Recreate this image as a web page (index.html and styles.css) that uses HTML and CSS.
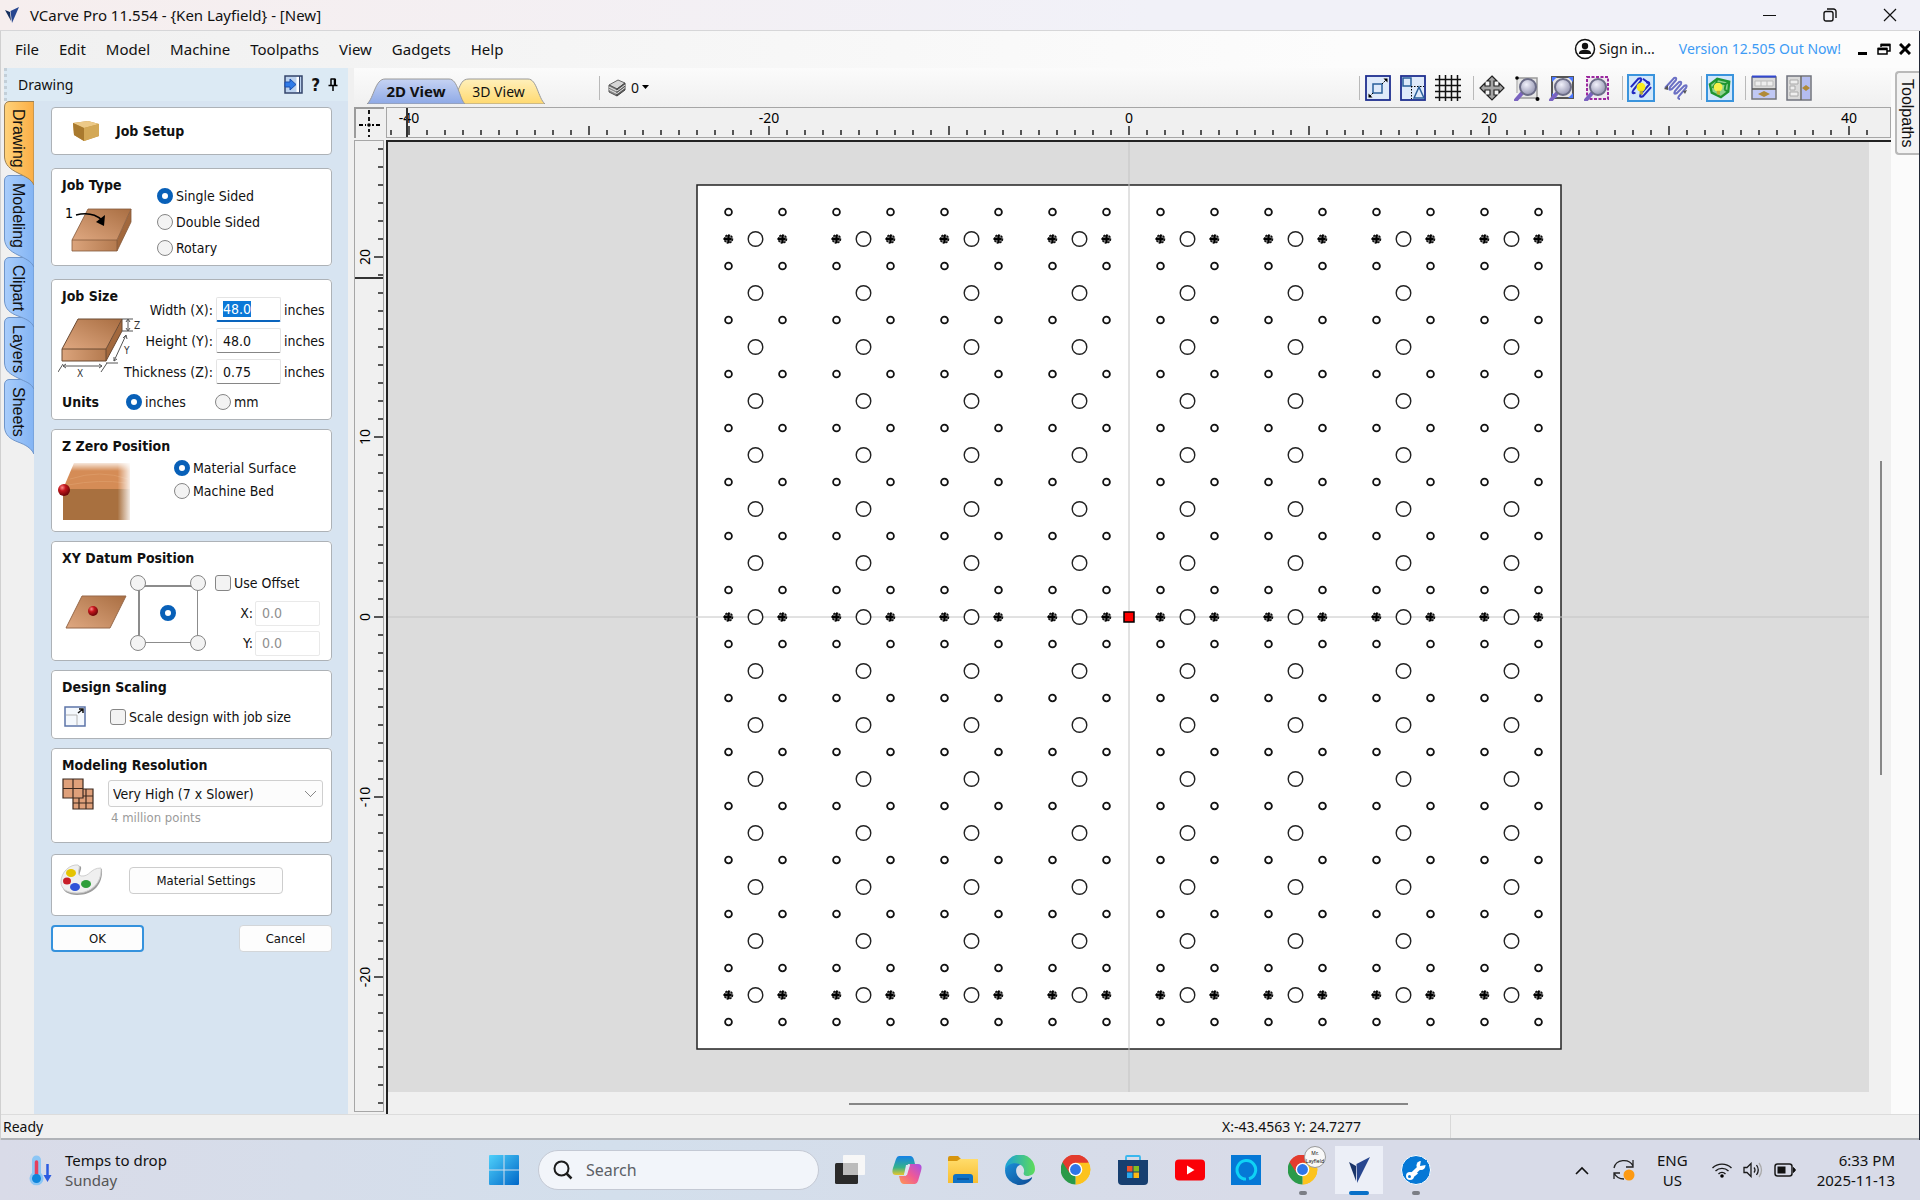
FILE: index.html
```html
<!DOCTYPE html>
<html lang="en">
<head>
    <meta charset="UTF-8">
    <meta name="viewport" content="width=device-width, initial-scale=1.0">
    <title>VCarve Pro 11.554 - {Ken Layfield} - [New]</title>
    <link rel="stylesheet" href="styles.css">
</head>
<body>

    <!-- shared gradients -->
    <svg class="defs" width="0" height="0" aria-hidden="true">
        <defs>
            <linearGradient id="wood" x1="0" y1="1" x2="1" y2="0"><stop offset="0" stop-color="#dfa881"/><stop offset="1" stop-color="#a96e42"/></linearGradient>
            <linearGradient id="woodSide" x1="0" y1="0" x2="1" y2="0"><stop offset="0" stop-color="#dba47c"/><stop offset="1" stop-color="#b47a4f"/></linearGradient>
            <linearGradient id="tabOrange"><stop offset="0" stop-color="#ffd27a"/><stop offset="1" stop-color="#fbae45"/></linearGradient>
            <linearGradient id="tabBlue"><stop offset="0" stop-color="#a9cdfb"/><stop offset="1" stop-color="#83b4f4"/></linearGradient>
            <linearGradient id="view2d" x1="0" y1="0" x2="0" y2="1"><stop offset="0" stop-color="#c6d3f3"/><stop offset="1" stop-color="#8ea9e6"/></linearGradient>
            <linearGradient id="view3d" x1="0" y1="0" x2="0" y2="1"><stop offset="0" stop-color="#fff0bb"/><stop offset="1" stop-color="#ffd970"/></linearGradient>
            <radialGradient id="ball" cx=".35" cy=".3" r=".7"><stop offset="0" stop-color="#ff8a8a"/><stop offset=".4" stop-color="#c4161c"/><stop offset="1" stop-color="#6d0508"/></radialGradient>
            <radialGradient id="lens" cx=".4" cy=".35" r=".7"><stop offset="0" stop-color="#f1f1fb"/><stop offset="1" stop-color="#8f90ad"/></radialGradient>
            <linearGradient id="win" x1="0" y1="0" x2="1" y2="1"><stop offset="0" stop-color="#4fd0fa"/><stop offset="1" stop-color="#0067c8"/></linearGradient>
            <linearGradient id="folder" x1="0" y1="0" x2="0" y2="1"><stop offset="0" stop-color="#ffdc6b"/><stop offset="1" stop-color="#f8bd2f"/></linearGradient>
            <linearGradient id="edgeTop" x1="0" y1="0" x2="1" y2="0"><stop offset="0" stop-color="#199fdb"/><stop offset="1" stop-color="#5fdc58"/></linearGradient>
            <linearGradient id="edgeLow" x1="0" y1="0" x2="1" y2="1"><stop offset="0" stop-color="#1b8fd8"/><stop offset="1" stop-color="#0d4a94"/></linearGradient>
            <linearGradient id="pilotA" x1="0" y1="0" x2="0" y2="1"><stop offset="0" stop-color="#1581e8"/><stop offset=".6" stop-color="#35b28a"/><stop offset="1" stop-color="#e9c62c"/></linearGradient>
            <linearGradient id="pilotB" x1="1" y1="0" x2="0" y2="1"><stop offset="0" stop-color="#a650e8"/><stop offset=".5" stop-color="#ef5a96"/><stop offset="1" stop-color="#ff9a4f"/></linearGradient>
            <g id="lensIcon">
                <path d="M2 25 9 17" stroke="#7a63c0" stroke-width="4" stroke-linecap="round"/>
                <circle cx="14" cy="12" r="8" fill="url(#lens)" stroke="#6b6c86" stroke-width="2"/>
            </g>
            <g id="chromeIcon">
                <path d="M15 15 1.600 7.500A15.400 15.400 0 0 1 28.400 7.500Z" fill="#e33b2e"/>
                <path d="M15 15 28.400 7.500A15.400 15.400 0 0 1 15 30.400Z" fill="#fcc31e"/>
                <path d="M15 15 15 30.400A15.400 15.400 0 0 1 1.600 7.500Z" fill="#2a9a49"/>
                <path d="M15 8H28.600A15.400 15.400 0 0 0 1.600 7.500L8.900 18.500Z" fill="#e33b2e"/>
                <path d="M21 18.500 15 30.400A15.400 15.400 0 0 0 28.600 8H15Z" fill="#fcc31e"/>
                <circle cx="15" cy="15" r="7" fill="#fff"/>
                <circle cx="15" cy="15" r="5.600" fill="#2f76e8"/>
            </g>
        </defs>
    </svg>

    <header class="titlebar">
        <svg width="16" height="18" viewBox="0 0 16 18"><path d="M1 4 6 6 7 15Z" fill="#16305f"/><path d="M6.500 5 15 1 8 17Z" fill="#27468f"/></svg>
        <h1>VCarve Pro 11.554 - {Ken Layfield} - [New]</h1>
        <div class="window-buttons">
            <button aria-label="Minimize"><svg width="14" height="14" viewBox="0 0 14 14"><path d="M0 7.500H13" stroke="#111"/></svg></button>
            <button aria-label="Restore"><svg width="14" height="14" viewBox="0 0 14 14" fill="none" stroke="#111" stroke-width="1.400"><rect x="1" y="3.500" width="9" height="9.500" rx="2"/><path d="M4 1H10.500A2.500 2.500 0 0 1 13 3.500V10"/></svg></button>
            <button aria-label="Close"><svg width="14" height="14" viewBox="0 0 14 14"><path d="M1 1 13 13M13 1 1 13" stroke="#111" stroke-width="1.200"/></svg></button>
        </div>
    </header>

    <div class="window">
        <nav class="menubar">
            <button>File</button>
            <button>Edit</button>
            <button>Model</button>
            <button>Machine</button>
            <button>Toolpaths</button>
            <button>View</button>
            <button>Gadgets</button>
            <button>Help</button>
            <button class="sign-in">
                <svg width="22" height="22" viewBox="0 0 22 22"><circle cx="11" cy="11" r="9.500" fill="#fff" stroke="#111" stroke-width="1.500"/><circle cx="11" cy="8" r="3.200" fill="#111"/><path d="M4.800 16C5 12.500 8 11.800 11 11.800S17 12.500 17.200 16Z" fill="#111"/></svg>
                Sign in...
            </button>
            <a class="version" href="#">Version 12.505 Out Now!</a>
            <div class="mdi-buttons">
                <button aria-label="Minimize view"><svg width="12" height="12" viewBox="0 0 12 12"><path d="M1 10.500H10" stroke="#000" stroke-width="3"/></svg></button>
                <button aria-label="Restore view"><svg width="14" height="12" viewBox="0 0 14 12" fill="none" stroke="#000" stroke-width="1.500"><path d="M4 4V1.500H13V8H10"/><path d="M4 2H13M1 6H10" stroke-width="2.500"/><rect x="1" y="5.500" width="9" height="5.500"/></svg></button>
                <button aria-label="Close view"><svg width="12" height="12" viewBox="0 0 12 12"><path d="M1 1 11 11M11 1 1 11" stroke="#000" stroke-width="3"/></svg></button>
            </div>
        </nav>

        <main class="workspace">
            <!-- Drawing panel -->
            <section class="side">
                <header class="side-header">
                    <h2>Drawing</h2>
                    <button aria-label="Switch layout"><svg width="19" height="19" viewBox="0 0 19 19"><rect x="1" y="1" width="17" height="17" fill="#bcd2ee" stroke="#34456b" stroke-width="1.500"/><path d="M14 2V17" stroke="#fff" stroke-width="3"/><path d="M15.500 1V18" stroke="#34456b"/><path d="M1 7H6V4L12 9.500 6 15V12H1Z" fill="#2f7be8" stroke="#1b4fae"/></svg></button>
                    <button class="help">?</button>
                    <button aria-label="Pin"><svg width="10" height="14" viewBox="0 0 10 14"><path d="M2.500 1H7.500M3 1V7M6.500 1V7M7.300 1V7M0.500 7.500H9.500M5 8V13" stroke="#000" stroke-width="1.500"/></svg></button>
                </header>
                <div class="side-body">
                    <div class="rail">
                        <button class="rail-tab drawing"><svg viewBox="0 0 30 84" preserveAspectRatio="none"><path d="M30 .5H5Q.5 1 .5 6V56C1 64 6 68 14 72S27 78 30 84Z" fill="url(#tabOrange)" stroke="#9b8157"/></svg><span>Drawing</span></button>
                        <button class="rail-tab modeling"><svg viewBox="0 0 30 92" preserveAspectRatio="none"><path d="M30 .5H5Q.5 1 .5 6V64C1 72 6 76 14 80S27 86 30 92Z" fill="url(#tabBlue)" stroke="#6f95c9"/></svg><span>Modeling</span></button>
                        <button class="rail-tab clipart"><svg viewBox="0 0 30 70" preserveAspectRatio="none"><path d="M30 .5H5Q.5 1 .5 6V44C1 52 6 56 14 59S27 64 30 70Z" fill="url(#tabBlue)" stroke="#6f95c9"/></svg><span>Clipart</span></button>
                        <button class="rail-tab layers"><svg viewBox="0 0 30 72" preserveAspectRatio="none"><path d="M30 .5H5Q.5 1 .5 6V46C1 54 6 57 14 61S27 66 30 72Z" fill="url(#tabBlue)" stroke="#6f95c9"/></svg><span>Layers</span></button>
                        <button class="rail-tab sheets"><svg viewBox="0 0 30 75" preserveAspectRatio="none"><path d="M30 .5H5Q.5 1 .5 6V48C1 56 6 60 14 63S27 69 30 75Z" fill="url(#tabBlue)" stroke="#6f95c9"/></svg><span>Sheets</span></button>
                    </div>

                    <form class="cards">
                        <div class="card heading">
                            <svg width="28" height="24" viewBox="0 0 28 24"><path d="M1 4 16 2 27 5V17L12 22 2 16Z" fill="#c59440"/><path d="M1 4 16 2 27 5 12 9Z" fill="#ecc987"/><path d="M1 4 12 9V22L2 16Z" fill="#a97a2e"/><path d="M12 9 27 5V17L12 22Z" fill="#d3a856"/></svg>
                            <h3>Job Setup</h3>
                        </div>

                        <fieldset class="card job-type">
                            <div>
                                <h3>Job Type</h3>
                                <svg width="74" height="48" viewBox="0 0 74 48">
                                    <path d="M26 4H69L55 35H10Z" fill="url(#wood)"/><path d="M10 35H55V46H10Z" fill="url(#woodSide)"/><path d="M55 35 69 4V17L55 46Z" fill="#a2683d"/>
                                    <path d="M10 35H55V46H10ZM26 4H69L55 35M69 4V17L55 46M26 4 10 35" fill="none" stroke="#84583a" stroke-width=".8"/>
                                    <path d="M14 10Q30 6 40 15" fill="none" stroke="#000" stroke-width="1.600"/><path d="M34 17 43 10 42 21Z"/>
                                    <text x="3" y="13" font-size="14">1</text>
                                </svg>
                            </div>
                            <div class="options">
                                <label><input type="radio" name="type" checked> Single Sided</label>
                                <label><input type="radio" name="type"> Double Sided</label>
                                <label><input type="radio" name="type"> Rotary</label>
                            </div>
                        </fieldset>

                        <fieldset class="card job-size">
                            <div class="split">
                                <div class="size-picture">
                                    <h3>Job Size</h3>
                                    <svg width="86" height="62" viewBox="0 0 86 62">
                                        <path d="M20 2H64L48 32H4Z" fill="url(#wood)"/><path d="M4 32H48V44H4Z" fill="url(#woodSide)"/><path d="M48 32 64 2V14L48 44Z" fill="#a2683d"/>
                                        <path d="M4 32H48V44H4ZM20 2H64L48 32M64 2V14L48 44M20 2 4 32" fill="none" stroke="#6b4a33"/>
                                        <g stroke="#555" fill="none"><path d="M64 2H75M64 14H75M70 3V13M68 5 70 2 72 5M68 11 70 14 72 11M5 47 0 55M49 46 43 55M5 49H44M8 47 5 49 8 51M41 47 44 49 41 51M48 46H60M68 18 56 44M65 21 68 18 69 22M56 40 56 44 59 42"/></g>
                                        <g font-size="10" fill="#333"><text x="76" y="12">Z</text><text x="66" y="37">Y</text><text x="19" y="60">X</text></g>
                                    </svg>
                                </div>
                                <div class="fields">
                                    <label for="width">Width (X):</label><input id="width" class="active" type="text" value="48.0"><span>inches</span>
                                    <label for="height">Height (Y):</label><input id="height" type="text" value="48.0"><span>inches</span>
                                    <label for="thickness">Thickness (Z):</label><input id="thickness" type="text" value="0.75"><span>inches</span>
                                </div>
                            </div>
                            <div class="units">
                                <h3>Units</h3>
                                <label><input type="radio" name="units" checked> inches</label>
                                <label><input type="radio" name="units"> mm</label>
                            </div>
                        </fieldset>

                        <fieldset class="card z-zero">
                            <h3>Z Zero Position</h3>
                            <div class="split">
                                <svg width="74" height="62" viewBox="-2 0 74 62">
                                    <defs><linearGradient id="fade"><stop offset=".8" stop-color="#fff" stop-opacity="0"/><stop offset="1" stop-color="#fff"/></linearGradient><linearGradient id="fadeTop" x1="0" y1="0" x2="0" y2="1"><stop offset="0" stop-color="#fff"/><stop offset=".16" stop-color="#fff" stop-opacity="0"/></linearGradient></defs>
                                    <path d="M14 2H70V28H3Z" fill="#d58c56"/><path d="M3 28H70V59H3Z" fill="#a8703f"/><path d="M10 18Q40 8 68 18M8 24Q40 18 66 22" fill="none" stroke="#dc9965"/>
                                    <path d="M0 0H72V62H0Z" fill="url(#fade)"/><path d="M0 0H72V62H0Z" fill="url(#fadeTop)"/>
                                    <circle cx="4" cy="29" r="6" fill="url(#ball)"/>
                                </svg>
                                <div class="options">
                                    <label><input type="radio" name="zzero" checked> Material Surface</label>
                                    <label><input type="radio" name="zzero"> Machine Bed</label>
                                </div>
                            </div>
                        </fieldset>

                        <fieldset class="card datum">
                            <h3>XY Datum Position</h3>
                            <div class="split">
                                <svg width="64" height="36" viewBox="0 0 64 36"><path d="M18 1H62L46 33H2Z" fill="url(#wood)" stroke="#97694a"/><circle cx="29" cy="16" r="5" fill="url(#ball)"/></svg>
                                <div class="corners">
                                    <input type="radio" name="datum" aria-label="Top left">
                                    <input type="radio" name="datum" aria-label="Top right">
                                    <input type="radio" name="datum" class="middle" aria-label="Center" checked>
                                    <input type="radio" name="datum" aria-label="Bottom left">
                                    <input type="radio" name="datum" aria-label="Bottom right">
                                </div>
                                <div class="offset">
                                    <label class="use-offset"><input type="checkbox"> Use Offset</label>
                                    <label for="offsetX">X:</label><input id="offsetX" type="text" value="0.0" disabled>
                                    <label for="offsetY">Y:</label><input id="offsetY" type="text" value="0.0" disabled>
                                </div>
                            </div>
                        </fieldset>

                        <fieldset class="card scaling">
                            <h3>Design Scaling</h3>
                            <div class="split">
                                <svg width="24" height="22" viewBox="0 0 24 22"><rect x="1" y="1" width="20" height="19" fill="#f4f8fd" stroke="#5c74a8" stroke-width="1.500"/><path d="M2 9H13V19" fill="none" stroke="#b4b4b4"/><path d="M14 7 19 3M15 3H19V7" fill="none" stroke="#111" stroke-width="1.500"/></svg>
                                <label><input type="checkbox"> Scale design with job size</label>
                            </div>
                        </fieldset>

                        <fieldset class="card resolution">
                            <h3>Modeling Resolution</h3>
                            <div class="split">
                                <svg width="32" height="32" viewBox="0 0 32 32"><g fill="#dfa07a" stroke="#3d2a20" stroke-width="1.200"><path d="M11 11H31V31H11ZM11 18H31M11 25H31M17 11V31M24 11V31"/><path d="M1 1H21V20H1ZM1 10.500H21M11 1V20"/></g></svg>
                                <div>
                                    <select aria-label="Modeling resolution"><option>Very High (7 x Slower)</option></select>
                                    <p>4 million points</p>
                                </div>
                            </div>
                        </fieldset>

                        <div class="card material">
                            <svg width="43" height="34" viewBox="0 0 43 34"><path d="M2 20C2 8 12 0 20 2 24 4 16 12 22 13 32 14 31 4 42 5 43 20 34 31 17 31 8 31 2 27 2 20Z" fill="#9c9c9c"/><path d="M1 18C1 8 10 0 18 1 22 3 15 10 21 12 30 13 30 4 41 4 42 18 32 29 17 29 7 29 1 25 1 18Z" fill="#efefef" stroke="#cfcfcf"/><ellipse cx="11" cy="9" rx="5" ry="4" fill="#e5c400"/><ellipse cx="7" cy="17" rx="4" ry="3.500" fill="#c81e28"/><ellipse cx="15" cy="23" rx="5" ry="4" fill="#2f52d8"/><ellipse cx="26" cy="20" rx="5" ry="4" fill="#2f9e3a"/></svg>
                            <button type="button">Material Settings</button>
                        </div>

                        <div class="actions">
                            <button type="button" class="primary">OK</button>
                            <button type="button">Cancel</button>
                        </div>
                    </form>
                </div>
            </section>

            <!-- 2D view -->
            <section class="view">
                <div class="view-toolbar">
                    <button class="view-tab two-d"><svg viewBox="0 0 98 26" preserveAspectRatio="none"><path d="M0 26C7 20 8 1 18 1H82C91 1 92 20 98 26Z" fill="url(#view2d)" stroke="#9a9a9a"/></svg><span>2D View</span></button>
                    <button class="view-tab three-d"><svg viewBox="0 0 87 26" preserveAspectRatio="none"><path d="M5 26 0 12C3 6 4 1 11 1H70C79 1 80 20 87 26Z" fill="url(#view3d)" stroke="#9a9a9a"/></svg><span>3D View</span></button>
                    <i class="sep stack-sep"></i>
                    <button class="sheet-picker">
                        <svg width="18" height="20" viewBox="0 0 18 20"><path d="M1 7 10 2 17 5 9 11Z" fill="#d6d6d6" stroke="#666"/><path d="M1 7 9 11V18L1 14Z" fill="#8b8b8b" stroke="#555"/><path d="M9 11 17 5V12L9 18Z" fill="#5d5d5d" stroke="#444"/><path d="M1 9 9 13 17 7M1 11.500 9 15.500 17 9.500" fill="none" stroke="#e8e8e8"/></svg>
                        0
                        <svg width="8" height="5" viewBox="0 0 8 5"><path d="M0 0H7L3.500 4Z"/></svg>
                    </button>
                    <div class="tools">
                        <i class="sep"></i>
                        <button aria-label="Scale"><svg viewBox="0 0 26 26"><rect x="1" y="1" width="24" height="24" fill="#dfeafa" stroke="#1f2f8f" stroke-width="1.800"/><rect x="8" y="9" width="9" height="9" fill="none" stroke="#2a5f9a" stroke-width="1.500"/><path d="M17 9 22 4M8 18 4 22" stroke="#000" stroke-dasharray="2 1"/><path d="M18.500 3.500H22.500V7.500ZM3.500 18.500V22.500H7.500Z"/></svg></button>
                        <button aria-label="Snap to objects"><svg viewBox="0 0 26 26"><rect x="1" y="1" width="24" height="24" fill="#dfeafa" stroke="#1f2f8f" stroke-width="1.800"/><rect x="3" y="3" width="8" height="8" fill="none" stroke="#2a5f9a" stroke-width="1.500"/><path d="M11 11.500H24M11.500 11V24" stroke="#000" stroke-dasharray="1.500 1.500"/><path d="M14 23 19 12 24 23Z" fill="none" stroke="#2a5f9a" stroke-width="1.500"/></svg></button>
                        <button aria-label="Snap to grid"><svg viewBox="0 0 26 26"><path d="M4.500 0V26M10.500 0V26M16.500 0V26M22.500 0V26M0 4.500H26M0 10.500H26M0 16.500H26M0 22.500H26" stroke="#111" stroke-width="1.500"/></svg></button>
                        <i class="sep"></i>
                        <button aria-label="Pan"><svg viewBox="0 0 26 26"><path d="M13 1 18 6H15V11H20V8L25 13 20 18V15H15V20H18L13 25 8 20H11V15H6V18L1 13 6 8V11H11V6H8Z" fill="#a5a5a5" stroke="#222" stroke-width="1.200"/></svg></button>
                        <button aria-label="Zoom box"><svg viewBox="0 0 26 26"><path d="M3 3H23V23H5" fill="#e6e6e6" stroke="#9a9a9a" stroke-width="1.500"/><path d="M3 3V18" stroke="#9a9a9a"/><use href="#lensIcon"/><circle cx="3" cy="3" r="1.800"/><circle cx="23.500" cy="24" r="2"/></svg></button>
                        <button aria-label="Zoom extents"><svg viewBox="0 0 26 26"><rect x="3" y="2" width="21" height="21" fill="#e6e6e6" stroke="#555" stroke-width="2"/><path d="M3 2H8L3 7ZM24 2H19L24 7ZM24 23H19L24 18ZM3 23H8L3 18Z" fill="#4a77ff"/><use href="#lensIcon"/></svg></button>
                        <button aria-label="Zoom selected"><svg viewBox="0 0 26 26"><rect x="3" y="2" width="21" height="22" fill="#efe9f0" stroke="#9b279f" stroke-width="2" stroke-dasharray="3 1.500"/><use href="#lensIcon"/></svg></button>
                        <i class="sep"></i>
                        <button class="on" aria-label="Show toolpaths"><svg viewBox="0 0 26 26"><path d="M2 12 10 3Q14 1 13 5L5 15Q2 20 7 18M19 8Q22 5 22 9L13 19Q10 24 15 22L24 12M15 3 22 8" fill="none" stroke="#2229c0" stroke-width="2.200"/><circle cx="13" cy="12" r="4.800" fill="#f7ec1e"/><rect x="11.500" y="16" width="3.500" height="4" fill="#b8ab2c"/></svg></button>
                        <button aria-label="Edit toolpaths"><svg viewBox="0 0 26 26"><path d="M2 13 11 3Q14 2 13 5L7 12Q5 16 9 14L16 7Q19 6 18 9L12 16Q10 20 14 18L21 11Q25 9 23 13L16 21Q14 24 17 24" fill="none" stroke="#6a6fc4" stroke-width="2"/><path d="M1 14 5 10V15ZM22 19 24 15 20 16Z" fill="#555"/></svg></button>
                        <i class="sep"></i>
                        <button class="on" aria-label="Show solid"><svg viewBox="0 0 26 26"><path d="M2 9 10 3 23 6 22 17 14 23 4 18Z" fill="#8fd28e" stroke="#1e9430" stroke-width="2.500"/><path d="M5 13 9 7 19 9 18 15M19 9 23 6M18 15 22 17M9 7 10 3" fill="none" stroke="#1e9430" stroke-width="2"/><circle cx="11" cy="12" r="4.800" fill="#f7f04a"/><rect x="9.500" y="16" width="3.500" height="4" fill="#c1b52e"/></svg></button>
                        <i class="sep"></i>
                        <button aria-label="Dock bottom"><svg viewBox="0 0 26 26"><rect x="1" y="2" width="24" height="22" fill="#dadada" stroke="#70737e" stroke-width="1.500"/><path d="M1 1.500H25" stroke="#3348d0" stroke-width="2"/><rect x="2" y="15" width="22" height="8" fill="#c0c8f4"/><path d="M1 14H25" stroke="#555" stroke-width="1.500"/><path d="M4 6H22V11H4ZM10 6V11M16 6V11" fill="#eee" stroke="#bbb"/><path d="M7 19 13 16 19 19 13 22Z" fill="#b08a37"/></svg></button>
                        <button aria-label="Dock right"><svg viewBox="0 0 26 26"><rect x="1" y="1" width="24" height="24" fill="#dadada" stroke="#70737e" stroke-width="1.500"/><rect x="16" y="2" width="8" height="22" fill="#b4bdf0"/><path d="M15 1V25" stroke="#666" stroke-width="1.500"/><path d="M4 5H12V9H4ZM4 11H9V15H4ZM4 17H12V21H4Z" fill="#eee" stroke="#aaa"/><path d="M16 13 20 10 24 13 20 16Z" fill="#b08a37"/></svg></button>
                    </div>
                </div>
                <div class="stage">
                    <div class="ruler-corner"><svg width="28" height="28" viewBox="0 0 28 28"><path d="M13 1V5M13 8V12M13 20V23M13 26V28M3 16H7M9 16H10M16 16H18M20 16H24" stroke="#000" stroke-width="1.800"/><circle cx="13" cy="16" r="1.800"/></svg></div>
                    <div class="ruler across"><svg id="rulerX"></svg></div>
                    <div class="ruler down"><svg id="rulerY"></svg></div>
                    <div class="canvas"><svg id="drawing"></svg></div>
                    <div class="scroll-y"><i></i></div>
                    <div class="scroll-x"><i></i></div>
                </div>
            </section>

            <aside class="dock"><button>Toolpaths</button></aside>
        </main>

        <footer class="status">
            <span>Ready</span>
            <span class="cursor">X:-43.4563 Y: 24.7277</span>
        </footer>
    </div>

    <!-- Windows taskbar -->
    <div class="taskbar">
        <button class="weather">
            <svg width="26" height="32" viewBox="0 0 26 32"><path d="M5 6A4.500 4.500 0 0 1 14 6V19A7 7 0 1 1 5 19Z" fill="#8cc6f5"/><path d="M9.500 8V24" stroke="#e5405e" stroke-width="3.500" stroke-linecap="round"/><circle cx="9.500" cy="24.500" r="4.500" fill="#0f86dc"/><path d="M20.500 10V25" stroke="#2d5be0" stroke-width="2.500"/><path d="M16.500 21H24.500L20.500 28Z" fill="#2d5be0"/></svg>
            <span>Temps to drop<small>Sunday</small></span>
        </button>
        <div class="task-center">
            <button class="start" aria-label="Start"><svg width="30" height="30" viewBox="0 0 30 30"><path d="M0 1Q0 0 1 0H14.500V14.500H0ZM15.500 0H29Q30 0 30 1V14.500H15.500ZM0 15.500H14.500V30H1Q0 30 0 29ZM15.500 15.500H30V29Q30 30 29 30H15.500Z" fill="url(#win)"/></svg></button>
            <label class="search">
                <svg width="20" height="20" viewBox="0 0 20 20" fill="none" stroke="#1c1c1c" stroke-width="2"><circle cx="8.500" cy="8.500" r="7"/><path d="M13.500 13.500 18.500 18.500" stroke-width="2.500"/></svg>
                <input type="text" placeholder="Search" aria-label="Search">
            </label>
            <div class="apps">
                <button aria-label="Task view"><svg viewBox="0 0 30 30"><rect x="0" y="8" width="23" height="21" rx="1.500" fill="#2a2a2a"/><rect x="8" y="0" width="22" height="20" rx="1" fill="#f7f7f7"/><path d="M8 8H23V20H8Z" fill="#bcbcbc"/></svg></button>
                <button aria-label="Copilot"><svg viewBox="0 0 30 30"><path d="M7 1H18Q21 1 22 5L23 9H16L12 20H4Q-1 20 1 13L4 4Q5 1 7 1Z" fill="url(#pilotA)"/><path d="M23 29H12Q9 29 8 25L7 21H14L18 9H26Q31 9 29 16L26 26Q25 29 23 29Z" fill="url(#pilotB)"/><path d="M14 10H18L15 20H12Z" fill="#dfe4f2"/></svg></button>
                <button aria-label="File Explorer"><svg viewBox="0 0 30 30"><path d="M0 3Q0 1 2 1H10L13 4H29Q30 4 30 5V28H0Z" fill="#d7950e"/><path d="M0 6H9L12 4H30V28H0Z" fill="url(#folder)"/><path d="M5 28V22Q5 19 8 19H22Q25 19 25 22V28Z" fill="#0f72c6"/><path d="M9 24H21" stroke="#0a4f94" stroke-width="1.500"/></svg></button>
                <button aria-label="Edge"><svg viewBox="0 0 30 30"><path d="M0 15A15 15 0 0 1 30 14C30 19 26 21 22 21 19 21 18 19 19 17 20 12 15 8 10 9 4 10 1 13 0 15Z" fill="url(#edgeTop)"/><path d="M0 15C2 9 10 6 16 10 10 10 9 20 16 24 20 26 25 24 27 22 28 24 22 30 15 30A15 15 0 0 1 0 15Z" fill="url(#edgeLow)"/></svg></button>
                <button aria-label="Chrome"><svg viewBox="0 0 31 31"><use href="#chromeIcon"/></svg></button>
                <button aria-label="Store"><svg viewBox="0 0 30 30"><path d="M8 6V2Q8 1 9 1H21Q22 1 22 2V6" fill="none" stroke="#39b7ee" stroke-width="1.800"/><path d="M0 5H30V26Q30 30 26 30H4Q0 30 0 26Z" fill="#173f70"/><path d="M9 11H14.500V16.500H9Z" fill="#f0522b"/><path d="M15.500 11H21V16.500H15.500Z" fill="#84bd1f"/><path d="M9 17.500H14.500V23H9Z" fill="#29a9ee"/><path d="M15.500 17.500H21V23H15.500Z" fill="#fdb913"/></svg></button>
                <button aria-label="YouTube"><svg viewBox="0 0 30 30"><rect y="4.500" width="30" height="21" rx="4" fill="#fb0007"/><path d="M12 10.500 19.500 15 12 19.500Z" fill="#fff"/></svg></button>
                <button aria-label="Alexa"><svg viewBox="0 0 30 30"><rect width="30" height="30" fill="#0578d6"/><path d="M13.500 25.500V24A9.300 9.300 0 1 1 18 23.800" fill="none" stroke="#0fd2f5" stroke-width="3"/></svg></button>
                <button class="running" aria-label="Chrome, Layfield"><svg viewBox="0 0 31 31"><use href="#chromeIcon"/></svg><i class="profile">Mr.<br>Layfield</i></button>
                <button class="running current" aria-label="VCarve Pro"><svg viewBox="0 0 30 30"><path d="M5 7 12 11 12 26Z" fill="#1a3468"/><path d="M12.500 9 26 2 13 28Z" fill="#27468f"/></svg></button>
                <button class="running" aria-label="Wrench tool"><svg viewBox="0 0 30 30"><circle cx="15" cy="15" r="14.500" fill="#0578d6" stroke="#fff"/><path d="M8 21 14 15.500 17 18.500 11 23.500Z" fill="#fff"/><path d="M9.500 21 19 12" stroke="#fff" stroke-width="4"/><circle cx="9" cy="21" r="4" fill="#fff"/><circle cx="8.500" cy="21.500" r="1.500" fill="#0578d6"/><circle cx="20" cy="10.500" r="4.500" fill="#fff"/><path d="M19 11 20 5 26 5 25 10Z" fill="#0578d6"/></svg></button>
            </div>
        </div>
        <div class="tray">
            <button aria-label="Hidden icons"><svg width="14" height="9" viewBox="0 0 14 9"><path d="M1 8 7 2 13 8" fill="none" stroke="#111" stroke-width="1.600"/></svg></button>
            <button class="sync" aria-label="Updates"><svg width="22" height="22" viewBox="0 0 22 22"><path d="M1 9A10 9 0 0 1 20 7M20 1V8H13M1 20V14H7M1 14Q4 20 11 20" fill="none" stroke="#222" stroke-width="1.300"/><circle cx="16" cy="16" r="5.500" fill="#fd9a12"/></svg></button>
            <button class="lang">ENG<br>US</button>
            <button class="system" aria-label="Network, sound, battery">
                <svg width="20" height="16" viewBox="0 0 20 16"><g fill="none" stroke="#1a1a1a" stroke-width="1.400"><path d="M.5 6A13.500 13.500 0 0 1 19.500 6M3.500 9A9.300 9.300 0 0 1 16.500 9M6.500 12A5 5 0 0 1 13.500 12"/></g><circle cx="10" cy="14" r="1.800"/></svg>
                <svg width="20" height="16" viewBox="0 0 20 16"><g fill="none" stroke="#1a1a1a" stroke-width="1.300"><path d="M1 5.500H4L8 1.500V14.500L4 10.500H1ZM11 5.500Q13 8 11 10.500M13.500 3Q17 8 13.500 13"/><path d="M16 1Q21 8 16 15" stroke="#aaa"/></g></svg>
                <svg width="22" height="14" viewBox="0 0 22 14"><rect x="1" y="1" width="17" height="12" rx="2.500" fill="none" stroke="#1a1a1a" stroke-width="1.500"/><rect x="3.500" y="3.500" width="8" height="7" fill="#111"/><path d="M19.500 4.500V9.500L21.500 7Z" stroke="#111"/></svg>
            </button>
            <button class="clock">6:33 PM<br>2025-11-13</button>
        </div>
    </div>

    <script src="script.js"></script>
</body>
</html>
```
FILE: styles.css
```css
* {
    box-sizing: border-box;
}
body {
    display: flex;
    flex-direction: column;
    min-height: 100vh;
    margin: 0;
    background-color: #f0f0f0;
    color: #111;
    font-family: "Noto Sans", "Open Sans", sans-serif;
    font-size: 14px;
}
button,
input,
select {
    font: inherit;
    color: inherit;
}
button {
    padding: 0;
    border: none;
    background: none;
}
h1,
h2,
h3,
p,
fieldset {
    margin: 0;
    padding: 0;
    border: none;
    font-size: 14px;
    font-weight: normal;
}
svg {
    display: block;
    flex: none;
}
.defs {
    position: absolute;
}

/* title bar */
.titlebar {
    display: flex;
    align-items: center;
    height: 31px;
    padding-left: 4px;
    background: linear-gradient(90deg, #f6eeee, #f1f1f8 60%);
    border-bottom: 1px solid #d6d6d8;
}
.titlebar h1 {
    margin-left: 10px;
    font-size: 15px;
    line-height: 30px;
}
.window-buttons {
    display: flex;
    margin-left: auto;
}
.window-buttons button {
    display: grid;
    place-items: center;
    width: 60px;
    height: 28px;
}

.window {
    display: flex;
    flex: 1;
    flex-direction: column;
    border-right: 1px solid #222836;
    border-left: 1px solid #d0d0d0;
}

/* menu */
.menubar {
    display: flex;
    align-items: center;
    height: 37px;
    padding: 0 0 2px 4px;
    background: linear-gradient(90deg, #f0f0f0, #fcfcfc 70%);
}
.menubar > button {
    padding: 0 10px;
    font-size: 15px;
}
.menubar .sign-in {
    display: flex;
    align-items: center;
    gap: 3px;
    margin-left: auto;
    font-size: 14px;
}
.version {
    margin-left: 14px;
    color: #3d9bf5;
    text-decoration: none;
}
.mdi-buttons {
    display: flex;
    gap: 8px;
    padding: 0 8px 0 16px;
}

.workspace {
    display: flex;
    flex: 1;
}

/* Drawing panel */
.side {
    display: flex;
    flex: none;
    flex-direction: column;
    width: 347px;
    font-family: "DejaVu Sans Condensed", "Noto Sans", sans-serif;
    font-size: 13px;
}
.side-header {
    display: flex;
    align-items: center;
    gap: 8px;
    height: 33px;
    margin-left: 3px;
    padding: 0 10px 0 11px;
    background: #dceaf4;
    border-left: 3px dotted #c3cfd8;
}
.side-header h2 {
    flex: 1;
    font-family: "Noto Sans", sans-serif;
}
.help {
    font-size: 17px;
    font-weight: bold;
}
.side-body {
    display: flex;
    flex: 1;
}
.rail {
    display: flex;
    flex: none;
    flex-direction: column;
    width: 33px;
    padding-left: 3px;
    background: #f0f0f0;
}
.rail-tab {
    position: relative;
    width: 30px;
    margin-bottom: -10px;
    font-family: "Liberation Sans", sans-serif;
    font-size: 16px;
    line-height: 28px;
    text-align: left;
}
.rail-tab svg {
    position: absolute;
    inset: 0;
    width: 100%;
    height: 100%;
}
.rail-tab span {
    position: relative;
    display: block;
    height: 100%;
    padding-top: 8px;
    writing-mode: vertical-rl;
}
.drawing {
    z-index: 5;
    height: 84px;
}
.modeling {
    z-index: 4;
    height: 92px;
}
.clipart {
    z-index: 3;
    height: 70px;
}
.layers {
    z-index: 2;
    height: 72px;
}
.sheets {
    z-index: 1;
    height: 75px;
}

.cards {
    display: flex;
    flex: 1;
    flex-direction: column;
    gap: 9px;
    min-width: 0;
    padding: 6px 16px 9px 17px;
    background: #d7e4f1;
}
.card {
    min-width: 0;
    padding: 7px 8px 0 10px;
    background: #fff;
    border: 1px solid #adb2b7;
    border-radius: 4px;
}
.card h3 {
    font-size: 14px;
    font-weight: bold;
    line-height: 18px;
}
.card label {
    white-space: nowrap;
}
.split {
    display: flex;
}
.options {
    display: flex;
    flex-direction: column;
}
.options label,
.units label,
.scaling label,
.use-offset {
    display: flex;
    align-items: center;
    gap: 3px;
}
.heading {
    display: flex;
    align-items: center;
    gap: 16px;
    height: 48px;
    margin-bottom: 4px;
    padding: 0 20px;
}
.job-type {
    display: flex;
    height: 98px;
    margin-bottom: 4px;
}
.job-type svg {
    margin-top: 11px;
}
.job-type .options {
    gap: 10px;
    padding: 12px 0 0 21px;
}
.job-size {
    height: 141px;
}
.size-picture {
    width: 62px;
}
.size-picture svg {
    margin: 12px 0 0 -4px;
}
.fields {
    display: grid;
    flex: 1;
    grid-template-columns: auto 65px 40px;
    grid-auto-rows: 25px;
    gap: 6px 3px;
    align-items: center;
    justify-content: end;
    padding-top: 10px;
    text-align: right;
}
.fields span {
    text-align: left;
}
.units {
    display: grid;
    grid-template-columns: 64px 89px auto;
    align-items: center;
    margin-top: 9px;
}
.z-zero {
    height: 103px;
}
.z-zero svg {
    margin: 6px 0 0 -4px;
}
.z-zero .options {
    gap: 7px;
    padding: 5px 0 0 42px;
}
.datum {
    height: 120px;
}
.datum svg {
    margin: 28px 2px 0 2px;
}
.corners {
    position: relative;
    display: grid;
    flex: none;
    grid-template-columns: 16px 16px;
    gap: 6px 44px;
    align-content: space-between;
    width: 76px;
    height: 76px;
    margin-top: 8px;
}
.corners::before {
    content: "";
    position: absolute;
    inset: 10px 8px 8px;
    border: 1px solid #8c8c8c;
    border-top-width: 2px;
    border-left-width: 2px;
}
.corners input {
    z-index: 1;
}
.corners .middle {
    grid-column: 1 / 3;
    justify-self: center;
}
.offset {
    display: grid;
    grid-template-columns: 38px 65px;
    grid-auto-rows: 24px;
    gap: 6px 2px;
    align-content: start;
    align-items: center;
    margin-left: 9px;
    padding-top: 4px;
    text-align: right;
}
.use-offset {
    grid-column: 1 / 3;
}
.scaling {
    height: 69px;
}
.scaling .split {
    align-items: center;
    gap: 22px;
    margin: 10px 0 0 2px;
}
.resolution {
    height: 95px;
    margin-bottom: 2px;
}
.resolution .split {
    gap: 14px;
    margin-top: 4px;
}
.resolution .split > div {
    flex: 1;
    padding-top: 2px;
}
.resolution p {
    padding-left: 3px;
    color: #9a9a9a;
    font-size: 13px;
    line-height: 22px;
}
.material {
    display: flex;
    gap: 26px;
    height: 62px;
    padding: 8px;
}
.material svg {
    margin-top: 1px;
}
.material button {
    width: 154px;
    height: 27px;
    margin-top: 4px;
    background: #fdfdfd;
    border: 1px solid #cdcdcd;
    border-radius: 4px;
}
.actions {
    display: flex;
    justify-content: space-between;
}
.actions button {
    width: 93px;
    height: 27px;
    background: #fdfdfd;
    border: 1px solid #d3d6d9;
    border-radius: 4px;
}
.actions .primary {
    border: 2px solid #3592dd;
}

/* form controls */
input[type="text"] {
    width: 65px;
    height: 25px;
    padding: 0 6px;
    background: #fff;
    border: 1px solid #e4e4e4;
    border-bottom-color: #868686;
    border-radius: 2px;
    outline: none;
}
input[type="text"].active {
    border-bottom: 2px solid #0a64bd;
}
input[type="text"]:disabled {
    color: #8f8f8f;
    border-color: #e9e9e9;
}
.active::selection {
    background: #0b78d7;
    color: #fff;
}
input[type="radio"],
input[type="checkbox"] {
    flex: none;
    width: 16px;
    height: 16px;
    margin: 0;
    appearance: none;
    background: #f3f3f3;
    border: 1px solid #868686;
    border-radius: 50%;
}
input[type="checkbox"] {
    border-radius: 3px;
}
input[type="radio"]:checked {
    background: #fff;
    border: 5px solid #0860b8;
}
select {
    width: 100%;
    height: 27px;
    padding: 0 4px;
    appearance: none;
    background: linear-gradient(45deg, transparent 46%, #888 46% 54%, transparent 54%) calc(100% - 11px) 50% / 6px 6px no-repeat,
        linear-gradient(-45deg, transparent 46%, #888 46% 54%, transparent 54%) calc(100% - 6px) 50% / 6px 6px no-repeat,
        #fcfcfc;
    border: 1px solid #cfcfcf;
    border-radius: 3px;
}

/* 2D view */
.view {
    display: flex;
    flex: 1;
    flex-direction: column;
    min-width: 0;
    padding-left: 6px;
}
.view-toolbar {
    display: flex;
    height: 39px;
    padding-left: 13px;
    background: linear-gradient(#fbfbfb, #f0f0f0);
}
.view-tab {
    position: relative;
    width: 98px;
    height: 26px;
    margin-top: 10px;
}
.view-tab svg {
    position: absolute;
    inset: 0;
    width: 100%;
    height: 100%;
}
.view-tab span {
    position: relative;
}
.two-d {
    z-index: 1;
    font-size: 15px;
    font-weight: bold;
}
.three-d {
    width: 87px;
    margin-left: -7px;
    padding-right: 6px;
}
.sep {
    width: 1px;
    height: 24px;
    margin: 8px 0 0 8px;
    background: #b9b9b9;
}
.stack-sep {
    margin-left: 54px;
}
.sheet-picker {
    display: flex;
    align-items: center;
    gap: 5px;
    height: 39px;
    margin-left: 8px;
}
.sheet-picker svg:last-child {
    margin-left: -2px;
}
.tools {
    display: flex;
    margin-left: auto;
    padding-right: 75px;
}
.tools button {
    display: grid;
    place-items: center;
    width: 35px;
    height: 40px;
}
.tools svg {
    width: 26px;
    height: 26px;
}
.tools .on svg {
    width: 28px;
    height: 28px;
    background: #d3e7fa;
    border: 2px solid #3a94dd;
}

.stage {
    display: grid;
    flex: 1;
    grid-template-columns: 30px 1fr 22px;
    grid-template-rows: 31px 1fr 20px;
    gap: 2px 0;
}
.ruler-corner {
    border-top: 2px solid #9b9b9b;
    border-left: 2px solid #9b9b9b;
}
.ruler {
    position: relative;
    background: #f0f0f0;
    border: 1px solid #a6a6a6;
}
.ruler svg {
    position: absolute;
    inset: 0;
    width: 100%;
    height: 100%;
    font-size: 14px;
}
.across {
    grid-column: 2 / 4;
    margin-left: 2px;
}
.down {
    grid-row: 2 / 4;
    margin: 0 0 2px;
}
.canvas {
    position: relative;
    margin-left: 2px;
    background: #dcdcdc;
    border-top: 2px solid #222;
    border-left: 2px solid #222;
}
.canvas svg {
    position: absolute;
    inset: 0;
    width: 100%;
    height: 100%;
}
.scroll-y {
    padding-left: 11px;
    border-top: 2px solid #222;
}
.scroll-y i {
    display: block;
    width: 2px;
    height: 33%;
    margin-top: 319px;
    background: #868686;
}
.scroll-x {
    grid-column: 2 / 4;
    margin: -2px 0 0 2px;
    padding-top: 11px;
    border-left: 2px solid #222;
}
.scroll-x i {
    display: block;
    width: 559px;
    height: 2px;
    margin-left: 461px;
    background: #868686;
}
.dock {
    width: 28px;
    padding-top: 3px;
    background: #fbfbfb;
}
.dock button {
    height: 84px;
    margin-left: 4px;
    padding-right: 2px;
    background: #f3f3f3;
    border: 2px solid #b9b9b9;
    border-right: none;
    border-radius: 4px 0 0 4px;
    font-family: "Liberation Sans", sans-serif;
    font-size: 16px;
    line-height: 20px;
    writing-mode: vertical-rl;
}

/* status bar */
.status {
    display: flex;
    justify-content: space-between;
    height: 26px;
    padding-left: 2px;
    border-top: 1px solid #dcdcdc;
    border-bottom: 2px solid #b0b3b8;
    line-height: 24px;
}
.status .cursor {
    width: 697px;
    background: linear-gradient(#d8d8d8, #d8d8d8) 228px 0 / 1px 100% no-repeat;
}

/* taskbar */
.taskbar {
    display: grid;
    grid-template-columns: 1fr auto 1fr;
    align-items: center;
    height: 60px;
    background: linear-gradient(90deg, #d9dbe8, #d3dfec 32%, #d8dbe8 65%, #d8dbe8);
    font-size: 15px;
    line-height: 20px;
}
.weather {
    display: flex;
    align-items: center;
    gap: 12px;
    padding-left: 27px;
    text-align: left;
}
.weather small {
    display: block;
    color: #555;
    font-size: 15px;
}
.task-center {
    display: flex;
    align-items: center;
}
.start {
    display: grid;
    place-items: center;
    width: 62px;
    padding-right: 6px;
}
.search {
    display: flex;
    align-items: center;
    gap: 13px;
    width: 281px;
    height: 40px;
    padding-left: 14px;
    background: #f2f5fa;
    border: 1px solid #c4c9d4;
    border-radius: 20px;
}
.search input[type="text"] {
    width: 200px;
    padding: 0;
    background: none;
    border: none;
    font-size: 16px;
}
.search input::placeholder {
    color: #5c5f66;
}
.apps {
    display: flex;
    width: 622px;
    margin-left: 3px;
}
.apps button {
    position: relative;
    display: grid;
    flex: 1;
    place-items: center;
    height: 48px;
}
.apps svg {
    width: 30px;
    height: 30px;
}
.running::after {
    content: "";
    position: absolute;
    bottom: -1px;
    left: 50%;
    width: 8px;
    height: 4px;
    margin-left: -4px;
    background: #7b7e85;
    border-radius: 2px;
}
.apps .current {
    background: linear-gradient(#eceff7, #eceff7) center / 48px 48px no-repeat;
}
.current::after {
    width: 20px;
    margin-left: -10px;
    background: #0870c8;
}
.profile {
    position: absolute;
    top: 0;
    right: 5px;
    width: 22px;
    height: 22px;
    padding-top: 2px;
    background: #f8f8f8;
    border: 1px solid #999;
    border-radius: 50%;
    font-size: 5px;
    font-style: normal;
    line-height: 8px;
}
.tray {
    display: flex;
    align-items: center;
    justify-content: flex-end;
    padding-right: 25px;
}
.tray .sync {
    margin-left: 24px;
}
.lang {
    margin-left: 22px;
}
.system {
    display: flex;
    align-items: center;
    gap: 11px;
    margin-left: 24px;
}
.clock {
    margin-left: 21px;
    text-align: right;
}
```
FILE: script.js
```js
const SCALE = 18; // pixels per inch

function line(x1, y1, x2, y2, color, width) {
    return `<path d="M${x1} ${y1}L${x2} ${y2}" stroke="${color}" stroke-width="${width}"/>`;
}

// horizontal ruler, a label every 20 inches
function drawRulerX(mid) {
    const svg = document.getElementById('rulerX');
    const h = svg.clientHeight;
    let out = '';
    for (let i = -41; i <= 41; i++) {
        const x = mid + i * SCALE;
        out += line(x, h - (i % 10 === 0 ? 11 : 7), x, h - 2, '#222', 1.5);
        if (i % 20 === 0) {
            out += `<text x="${x}" y="15" text-anchor="middle">${i}</text>`;
        }
    }
    out += line(20, 0, 20, h, '#333', 2); // pointer position
    svg.innerHTML = out;
}

// vertical ruler, a label every 10 inches
function drawRulerY(mid) {
    const svg = document.getElementById('rulerY');
    const w = svg.clientWidth;
    let out = '';
    for (let i = -27; i <= 26; i++) {
        const y = mid - i * SCALE;
        out += line(w - (i % 10 === 0 ? 9 : 5), y, w, y, '#222', 1.5);
        if (i % 10 === 0) {
            out += `<text transform="translate(15 ${y}) rotate(-90)" text-anchor="middle">${i}</text>`;
        }
    }
    out += line(0, 137, w, 137, '#333', 2);
    svg.innerHTML = out;
}

// the 48 x 48 sheet with its holes
function drawJob() {
    const svg = document.getElementById('drawing');
    const cx = Math.round(svg.clientWidth / 2);
    const cy = Math.round(svg.clientHeight / 2);
    const px = x => cx + x * SCALE;
    const py = y => cy - y * SCALE;
    let out = `<rect x="${px(-24)}" y="${py(24)}" width="${48 * SCALE}" height="${48 * SCALE}" fill="#fff" stroke="#222" stroke-width="1.5"/>`;
    out += line(0, cy, svg.clientWidth, cy, '#c4c4c4', 1);
    out += line(cx, 0, cx, svg.clientHeight, '#c4c4c4', 1);

    for (let col = 0; col < 8; col++) {
        const left = -22.25 + col * 6;
        for (const x of [left, left + 3]) {
            for (let y = 22.5; y >= -22.5; y -= 3) {
                out += `<circle cx="${px(x)}" cy="${py(y)}" r="3.4" fill="#fff" stroke="#111" stroke-width="1.8"/>`;
            }
            for (const y of [21, 0, -21]) {
                out += `<circle cx="${px(x)}" cy="${py(y)}" r="4" fill="#777" stroke="#111" stroke-width="1.5" stroke-dasharray="2 1"/>`;
                out += line(px(x) - 5, py(y), px(x) + 3, py(y), '#000', 2);
                out += line(px(x), py(y) - 4, px(x), py(y) + 4, '#000', 2);
            }
        }
        for (let y = 21; y >= -21; y -= 3) {
            out += `<circle cx="${px(left + 1.5)}" cy="${py(y)}" r="7.3" fill="#fff" stroke="#222" stroke-width="1.4"/>`;
        }
    }
    out += `<rect x="${cx - 5}" y="${cy - 5}" width="10" height="10" fill="#f00" stroke="#000" stroke-width="1.5"/>`;
    svg.innerHTML = out;
    return [cx, cy];
}

function draw() {
    const [cx, cy] = drawJob();
    drawRulerX(cx + 1);
    drawRulerY(cy + 1);
}

draw();
window.addEventListener('resize', draw);

document.getElementById('width').select();
```
